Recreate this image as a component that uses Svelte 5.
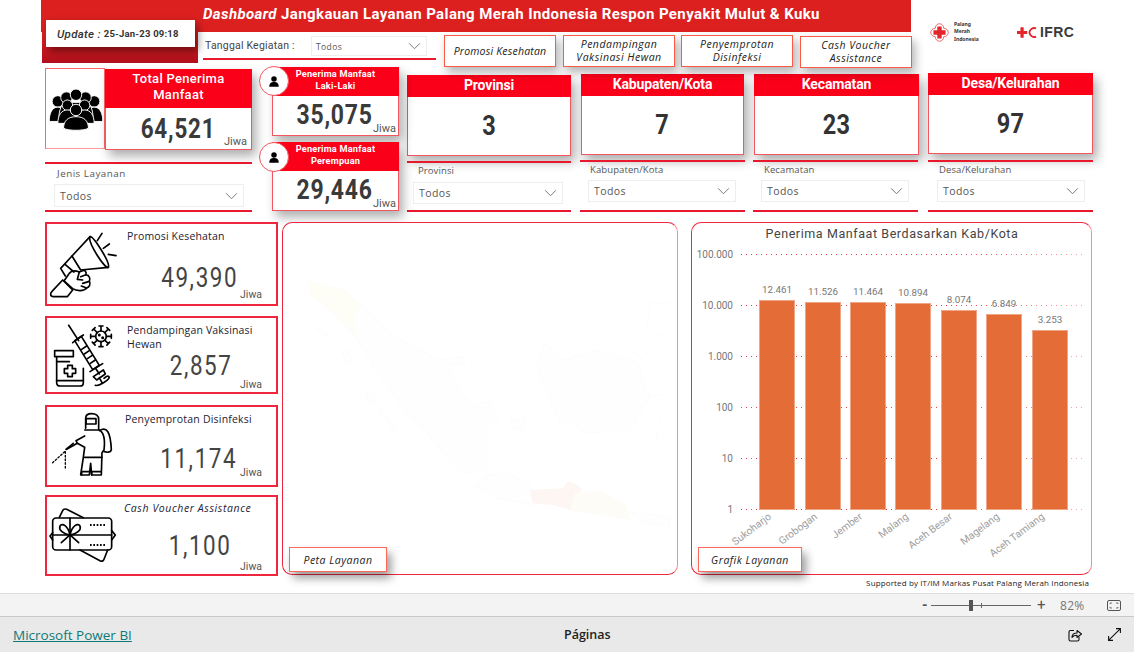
<script>
  const bars = [
    { name: 'Sukoharjo', label: '12.461', x: 759, top: 300, endX: 772 },
    { name: 'Grobogan', label: '11.526', x: 805, top: 302, endX: 818 },
    { name: 'Jember', label: '11.464', x: 850, top: 302, endX: 863 },
    { name: 'Malang', label: '10.894', x: 895, top: 303, endX: 909 },
    { name: 'Aceh Besar', label: '8.074', x: 941, top: 310, endX: 953 },
    { name: 'Magelang', label: '6.849', x: 986, top: 314, endX: 1000 },
    { name: 'Aceh Tamiang', label: '3.253', x: 1032, top: 330, endX: 1045 }
  ];
  const ticks = [
    { y: 254, t: '100.000' }, { y: 305, t: '10.000' }, { y: 356, t: '1.000' },
    { y: 407, t: '100' }, { y: 458, t: '10' }, { y: 509, t: '1' }
  ];
  const stats = [
    { k: 'p', title: 'Provinsi', value: '3' },
    { k: 'k', title: 'Kabupaten/Kota', value: '7' },
    { k: 'c', title: 'Kecamatan', value: '23' },
    { k: 'd', title: 'Desa/Kelurahan', value: '97' }
  ];
  const virus = [0, 45, 90, 135, 180, 225, 270, 315];
</script>

<div class="page">
  <div class="report">
    <header class="top">
      <div class="banner">
        <h1><em>Dashboard</em> Jangkauan Layanan Palang Merah Indonesia Respon Penyakit Mulut &amp; Kuku</h1>
      </div>
      <div class="update"><em>Update :</em> <b>25-Jan-23 09:18</b></div>
      <div class="logos">
        <svg class="pmi" viewBox="0 0 20 20" aria-hidden="true">
          <circle cx="10" cy="5.2" r="4.4" fill="#fff" stroke="#e2262b" stroke-width=".7"/>
          <circle cx="10" cy="14.8" r="4.4" fill="#fff" stroke="#e2262b" stroke-width=".7"/>
          <circle cx="5.2" cy="10" r="4.4" fill="#fff" stroke="#e2262b" stroke-width=".7"/>
          <circle cx="14.8" cy="10" r="4.4" fill="#fff" stroke="#e2262b" stroke-width=".7"/>
          <circle cx="10" cy="10" r="6" fill="#fff"/>
          <path d="M7.7 3.6h4.6v4.1h4.1v4.6h-4.1v4.1H7.7v-4.1H3.6V7.7h4.1z" fill="#e2262b"/>
        </svg>
        <div class="pmi-text">Palang<br />Merah<br />Indonesia</div>
        <svg class="ifrc-mark" viewBox="0 0 22 13" aria-hidden="true">
          <path d="M3.6 1h3.4v3.8h3.7v3.4H7V12H3.6V8.2H0V4.8h3.6z" fill="#e2262b"/>
          <path d="M20 2.3A5 5 0 0 0 13 6.500A5 5 0 0 0 20 10.700" fill="none" stroke="#e2262b" stroke-width="2"/>
        </svg>
        <span class="ifrc">IFRC</span>
      </div>
      <div class="toolbar">
        <div class="tab"></div>
        <div class="date-slicer">
          <span class="date-label">Tanggal Kegiatan :</span>
          <div class="select date-select"><span>Todos</span>
            <svg viewBox="0 0 12 7"><path d="M1 1l5 5 5-5" /></svg>
          </div>
        </div>
        <nav class="nav">
          <button class="b1">Promosi Kesehatan</button>
          <button class="b2">Pendampingan<br />Vaksinasi Hewan</button>
          <button class="b3">Penyemprotan<br />Disinfeksi</button>
          <button class="b4">Cash Voucher<br />Assistance</button>
        </nav>
      </div>
    </header>

    <section class="kpis">
      <div class="col-total">
        <div class="total-row">
          <div class="people">
            <svg viewBox="0 0 56 44" aria-hidden="true">
              <g fill="#000" stroke="#fff" stroke-width="1">
                <circle cx="9" cy="13" r="6"/><circle cx="47" cy="13" r="6"/>
                <path d="M0 34c0-9 3-15 9-15s9 6 9 15z"/><path d="M38 34c0-9 3-15 9-15s9 6 9 15z"/>
                <circle cx="18" cy="9" r="6"/><circle cx="38" cy="9" r="6"/>
                <circle cx="28" cy="6" r="6"/>
                <path d="M10 32c0-12 4-18 8-18h20c4 0 8 6 8 18z"/>
                <circle cx="19" cy="17" r="5.500"/><circle cx="37" cy="17" r="5.500"/>
                <path d="M9 36c0-9 4-14 10-14s10 5 10 14z"/><path d="M27 36c0-9 4-14 10-14s10 5 10 14z"/>
                <circle cx="28" cy="22" r="6"/>
                <path d="M15 41c0-8 5-12 13-12s13 4 13 12c-4 3-22 3-26 0z"/>
              </g>
            </svg>
          </div>
          <div class="total card">
            <div class="head">Total Penerima Manfaat</div>
            <div class="total-body"><span class="big">64,521</span><span class="jiwa">Jiwa</span></div>
          </div>
        </div>
        <div class="rule total-rule"></div>
        <div class="lbl jenis-lbl">Jenis Layanan</div>
        <div class="select jenis-select"><span>Todos</span>
          <svg viewBox="0 0 12 7"><path d="M1 1l5 5 5-5" /></svg>
        </div>
        <div class="rule end"></div>
      </div>

      <div class="col-gender">
        {#each [['Laki-Laki', '35,075'], ['Perempuan', '29,446']] as g, i}
          <div class="gender card" class:second={i === 1}>
            <div class="head">Penerima Manfaat<br />{g[0]}</div>
            <div class="gender-body"><span class="big">{g[1]}</span><span class="jiwa">Jiwa</span></div>
            <div class="circle">
              <svg viewBox="0 0 14 14" aria-hidden="true">
                <circle cx="7" cy="4" r="3.200" fill="#000"/>
                <path d="M1.500 13c0-4 2-5.500 5.500-5.500s5.500 1.500 5.500 5.500z" fill="#000"/>
              </svg>
            </div>
          </div>
        {/each}
      </div>

      {#each stats as s}
        <div class="stat {s.k}">
          <div class="card stat-card">
            <div class="stat-head">{s.title}</div>
            <div class="stat-value"><span>{s.value}</span></div>
          </div>
          <div class="rule stat-rule"></div>
          <div class="lbl stat-lbl">{s.title}</div>
          <div class="select stat-select"><span>Todos</span>
            <svg viewBox="0 0 12 7"><path d="M1 1l5 5 5-5" /></svg>
          </div>
          <div class="rule end"></div>
        </div>
      {/each}
    </section>

    <section class="main">
      <div class="services">
        <article class="svc s1">
          <svg class="ico" viewBox="0 0 80 80" aria-hidden="true">
            <g transform="translate(-7 -4) scale(.3333)" fill="none" stroke="#000" stroke-width="5" stroke-linejoin="round" stroke-linecap="round">
              <path d="M150 50 L96 108 L122 150 L205 142"/>
              <path d="M150 50 C160 48 212 128 205 142 C196 150 142 66 150 50z"/>
              <path d="M172 62L186 40M190 85L208 72M205 103L228 107"/>
              <path d="M96 108L62 145 76 168M76 134L102 156"/>
              <path d="M72 183L88 160C95 150 108 152 118 156L128 152C135 148 140 156 138 164 148 166 152 176 148 184 153 192 148 202 140 204 132 214 110 214 98 206z"/>
              <path d="M118 156L112 178 128 180M138 164L122 170M148 184L128 190M140 204L124 198"/>
              <path d="M68 180L98 210 82 230H40C30 230 30 220 36 214z"/>
            </g>
          </svg>
          <div class="svc-body">
            <h3>Promosi Kesehatan</h3>
            <div class="svc-val"><span class="num">49,390</span><span class="jiwa">Jiwa</span></div>
          </div>
        </article>
        <article class="svc s2">
          <svg class="ico" viewBox="0 0 80 74" aria-hidden="true">
            <g transform="translate(-7 -98) scale(.3333)" fill="none" stroke="#000" stroke-width="5" stroke-linejoin="round" stroke-linecap="round">
              <path d="M86 316L116 362"/>
              <path d="M104 362L124 349 178 436 158 449z"/>
              <path d="M98 368L130 345M140 378L125 388M148 392L133 402M157 406L142 416M166 420L151 430"/>
              <path d="M150 455L188 431M166 444L178 462M160 470L190 450 196 462 170 480zM178 473L186 488M166 496C175 500 205 482 208 472 205 465 198 470 192 475"/>
              <circle cx="183" cy="349" r="16"/>
              {#each virus as a}
                <path d="M183 333V319M177 318H189" transform="rotate({a} 183 349)"/>
              {/each}
              <circle cx="178" cy="345" r="2" fill="#000"/><circle cx="188" cy="353" r="2" fill="#000"/>
              <path d="M50 410V488C50 495 55 498 62 498H120C126 498 130 494 130 488V445"/>
              <path d="M44 392H100V410H44z"/>
              <path d="M50 425H88M50 482H130"/>
              <path d="M83 438h14v10h10v14h-10v10H83v-10H73v-14h10z" transform="translate(0 -2)"/>
            </g>
          </svg>
          <div class="svc-body">
            <h3>Pendampingan Vaksinasi Hewan</h3>
            <div class="svc-val"><span class="num">2,857</span><span class="jiwa">Jiwa</span></div>
          </div>
        </article>
        <article class="svc s3">
          <svg class="ico" viewBox="0 0 80 78" aria-hidden="true">
            <g transform="translate(-7 -7) scale(.3333)" fill="none" stroke="#000" stroke-width="5" stroke-linejoin="round" stroke-linecap="round">
              <path d="M137 85V55C137 45 145 41 155 41 168 41 176 48 176 58V88"/>
              <path d="M138 56H168V72H138z"/>
              <path d="M134 90H178C192 98 196 118 192 150L186 158 184 225H155L152 190 148 225H122L130 172 134 142 112 130 80 148"/>
              <path d="M134 108L108 122 112 130M178 92C200 78 212 95 214 150 212 158 200 158 190 154"/>
              <path d="M134 172H186M125 225V215H150M155 225V215H182"/>
              <path d="M100 130L78 148"/>
              <path d="M74 155L35 191M76 155V210" stroke-dasharray="5 6" stroke-width="4"/>
            </g>
          </svg>
          <div class="svc-body">
            <h3>Penyemprotan Disinfeksi</h3>
            <div class="svc-val"><span class="num">11,174</span><span class="jiwa">Jiwa</span></div>
          </div>
        </article>
        <article class="svc s4">
          <svg class="ico" viewBox="0 0 80 77" aria-hidden="true">
            <g transform="translate(-7 -97) scale(.3333)" fill="none" stroke="#000" stroke-width="5" stroke-linejoin="round" stroke-linecap="round">
              <path d="M58 352L68 332C70 327 74 326 80 328L130 353M38 398L30 408 38 420M215 392L226 405 215 420M120 450L180 482C186 485 190 484 192 478L203 450"/>
              <rect x="38" y="354" width="177" height="96" rx="10"/>
              <path d="M90 354V450M38 405H215"/>
              <path d="M90 405C70 402 55 390 60 378 66 368 84 376 90 405 96 376 114 368 120 378 125 390 110 402 90 405zM90 405L64 428M90 405L116 428"/>
              <path d="M150 375H195M150 435H195" stroke-dasharray="5 5" stroke-linecap="butt" stroke-width="6"/>
            </g>
          </svg>
          <div class="svc-body">
            <h3><em>Cash Voucher Assistance</em></h3>
            <div class="svc-val"><span class="num">1,100</span><span class="jiwa">Jiwa</span></div>
          </div>
        </article>
      </div>

      <div class="panel map">
        <svg class="map-svg" viewBox="0 0 396 353" aria-hidden="true">
          <g transform="translate(-2 38) scale(.3333)" stroke="#fafafa" stroke-width="2" fill="#fefefe">
            <path d="M85 65L130 75 190 90 240 130 340 230 430 270 470 310 510 330 545 400 620 470 620 630 550 640 500 590 440 520 380 460 280 320 230 235 150 150 90 100z"/>
            <path d="M85 65L130 75 190 90 240 130 220 170 235 235 205 200 150 150 90 100z" fill="#fefdf6" stroke="none"/>
            <path d="M795 250L850 300 950 270 1020 290 1075 310 1090 370 1110 410 1050 510 920 520 880 490 840 490 770 320z"/>
            <path d="M1050 270L1100 200 1110 130 1170 128M1055 275L1090 295 1130 230 1175 215M1110 410L1170 400M1055 550L1130 510 1130 545 1145 460" fill="none"/>
            <path d="M185 275L205 270 220 310 200 310zM255 395L275 395 290 430 270 435zM115 200L145 225 135 228 110 208zM300 445L350 505 340 510 300 460z"/>
            <path d="M435 275L470 300 550 290 555 310 480 320zM590 430L630 425 660 480 620 490zM690 480L735 475 735 505 700 510z"/>
            <path d="M585 680L620 645 680 640 750 670 760 735 650 715z"/>
            <path d="M750 690L850 685 860 665 880 668 905 685 885 755 820 735 760 730z" fill="#fdf6f2" stroke="none"/>
            <path d="M885 700L960 690 1040 735 1050 780 960 765 870 752z" fill="#fefcf6" stroke="none"/>
            <path d="M1050 755L1170 770 1170 800 1080 785z"/>
          </g>
        </svg>
        <button class="tag tag-map">Peta Layanan</button>
      </div>

      <div class="panel chart">
        <svg class="chart-svg" viewBox="691 222 401 353">
          <defs>
            <linearGradient id="gridfade" gradientUnits="userSpaceOnUse" x1="741" y1="0" x2="1084" y2="0">
              <stop offset="0" stop-color="#f23a42"/><stop offset=".6" stop-color="#f23a42"/><stop offset="1" stop-color="#f9a5a8"/>
            </linearGradient>
          </defs>
          <text class="title" x="892" y="238" text-anchor="middle">Penerima Manfaat Berdasarkan Kab/Kota</text>
          {#each ticks as t}
            <text class="axis" x="733" y={t.y + 4} text-anchor="end">{t.t}</text>
            <line x1="741" x2="1084" y1={t.y + .5} y2={t.y + .5} stroke="url(#gridfade)" class="grid" />
          {/each}
          {#each bars as b}
            <rect x={b.x + .5} y={b.top + .5} width="35" height={509 - b.top} class="bar" />
            <text class="val" x={b.x + 18} y={b.top - 7} text-anchor="middle">{b.label}</text>
            <text class="cat" text-anchor="end" transform="translate({b.endX} 518) rotate(-37)">{b.name}</text>
          {/each}
        </svg>
        <button class="tag tag-chart">Grafik Layanan</button>
      </div>
    </section>
    <div class="credit">Supported by IT/IM Markas Pusat Palang Merah Indonesia</div>
  </div>

  <div class="zoombar">
    <span class="minus">-</span>
    <div class="slider"><i class="thumb"></i><i class="tick"></i></div>
    <span class="plus">+</span>
    <span class="pct">82%</span>
    <svg class="fit" viewBox="0 0 14 11" aria-hidden="true">
      <rect x=".5" y=".5" width="13" height="10" rx="1.500" fill="none" stroke="#555"/>
      <path d="M3 4V3h2M9 3h2v1M3 7v1h2M9 8h2V7" fill="none" stroke="#555" stroke-width=".8"/>
    </svg>
  </div>
  <footer class="foot">
    <a href="#top" class="pbi">Microsoft Power BI</a>
    <span class="pages">Páginas</span>
    <svg class="share" viewBox="0 0 14 14" aria-hidden="true">
      <path d="M6 2.500H2.500A1.500 1.500 0 0 0 1 4v7.500A1.500 1.500 0 0 0 2.500 13h7a1.500 1.500 0 0 0 1.500-1.500V9" fill="none" stroke="#111" stroke-width="1.100"/>
      <path d="M4 9.500C4 6.500 6 5 9 5V2.500L13.500 6 9 9.500V7.300C7 7.300 5 8 4 9.500z" fill="none" stroke="#111" stroke-width="1.100" stroke-linejoin="round"/>
    </svg>
    <svg class="expand" viewBox="0 0 13 13" aria-hidden="true">
      <path d="M8 .6h4.400V5M12.200.8L.8 12.200M.6 8v4.400H5" fill="none" stroke="#111" stroke-width="1.100"/>
    </svg>
  </footer>
</div>

<style>
  :global(body) { margin: 0; background: #fff; }
  .page { width: 1134px; height: 652px; overflow: hidden; display: flex; flex-direction: column; font-family: Roboto, "Liberation Sans", sans-serif; color: #333; }
  .report { height: 593px; position: relative; flex: none; }
  button { font: inherit; cursor: pointer; }

  .top { height: 66px; position: relative; }
  .banner { margin-left: 41px; width: 870px; height: 32px; background: #dc2020; box-sizing: border-box; padding-left: 162px; }
  h1 { margin: 0; padding-top: 4px; font-size: 15px; line-height: 20px; font-weight: 700; color: #fff; letter-spacing: .39px; white-space: nowrap; }
  .update { position: absolute; left: 46px; top: 20px; width: 149px; height: 27px; padding-left: 11px; box-sizing: border-box; background: #fff; box-shadow: 3px 4px 8px rgba(0,0,0,.45); display: flex; align-items: center; gap: 3px; font-size: 10.500px; color: #333; z-index: 2; }
  .update em { font-weight: 500; font-size: 11.500px; letter-spacing: .3px; }
  .update b { font-weight: 700; font-size: 9.500px; letter-spacing: .2px; }
  .logos { position: absolute; left: 930px; top: 22px; display: flex; align-items: center; height: 20px; }
  .pmi { width: 19px; height: 19px; }
  .pmi-text { margin-left: 5px; font-size: 5px; line-height: 7.500px; font-weight: 700; color: #333; width: 35px; font-family: "Noto Sans", sans-serif; }
  .ifrc-mark { margin-left: 28px; width: 21px; height: 13px; }
  .ifrc { margin-left: 2px; font-size: 14px; font-weight: 700; color: #3a3a3a; letter-spacing: .4px; font-family: "Liberation Sans", sans-serif; }

  .toolbar { display: flex; height: 34px; }
  .tab { margin-left: 42px; width: 156px; height: 31px; background: linear-gradient(#dc2020 10%, #b00f1c); flex: none; }
  .date-slicer { margin-left: 5px; width: 233px; height: 26px; border-bottom: 2px solid #e8192c; display: flex; position: relative; flex: none; }
  .date-label { padding: 7px 0 0 2px; font-size: 10.500px; letter-spacing: .2px; color: #444; width: 106px; flex: none; font-family: Roboto, sans-serif; }
  .nav { margin-left: 8px; display: flex; gap: 7px; padding-top: 3px; }
  .nav button { width: 112px; height: 32px; padding: 0; background: #fff; border: 1px solid #fb5a45; box-shadow: 3px 5px 9px rgba(0,0,0,.3); font-style: italic; font-size: 10.500px; line-height: 13px; letter-spacing: .5px; color: #222; font-family: "Open Sans", sans-serif; }
  .nav .b1 { letter-spacing: .2px; }
  .nav .b3 { margin-left: -1px; }
  .nav .b4 { margin-top: 1px; }

  .select { box-sizing: border-box; background: #fff; border: 1px solid #eee; display: flex; align-items: center; justify-content: space-between; padding: 0 5px; font-size: 11px; letter-spacing: .4px; color: #555; font-family: "Open Sans", sans-serif; }
  .select svg { width: 13px; height: 8px; fill: none; stroke: #777; stroke-width: .9; }
  .date-select { margin-top: 4px; width: 116px; height: 20px; font-size: 8.500px; padding-left: 4px; }
  .date-select span { margin-top: 1px; }

  .kpis { height: 146px; padding-left: 45px; display: flex; }
  .card { box-sizing: border-box; background: #fff; border: 1px solid #f4565f; box-shadow: 4px 6px 10px rgba(0,0,0,.32); }
  .big { display: inline-block; font-size: 27px; line-height: 32px; font-weight: 700; letter-spacing: 1px; color: #3a3a3a; transform: scaleX(.83); }
  .jiwa { font-size: 11px; color: #555; letter-spacing: 0; }
  .rule { height: 2px; background: #e8192c; flex: none; }
  .end { margin-top: auto; }
  .lbl { font-size: 9.800px; letter-spacing: .5px; color: #555; line-height: 14px; font-family: "Open Sans", sans-serif; }

  .col-total { width: 207px; flex: none; display: flex; flex-direction: column; height: 146px; }
  .total-row { display: flex; margin-top: 2px; height: 82px; }
  .people { box-sizing: border-box; width: 60px; height: 81px; background: #fff; border: 1px solid #f66; border-bottom-color: #f99; display: flex; align-items: center; justify-content: center; }
  .people svg { width: 54px; height: 42px; margin-left: 2px; margin-top: 2px; }
  .total { width: 147px; height: 81px; margin-top: 1px; }
  .total .head { height: 39px; background: #fa0019; color: #fff; font-size: 13px; line-height: 16px; font-weight: 500; letter-spacing: .3px; text-align: center; padding: 2px 12px 0; box-sizing: border-box; margin: -1px -1px 0; }
  .total-body { position: relative; display: flex; justify-content: center; padding: 5px 0 0 0; }
  .total-body .jiwa { position: absolute; right: 4px; bottom: -3px; }
  .total-rule { margin-top: 12px; }
  .jenis-lbl { margin: 3px 0 0 12px; }
  .jenis-select { margin: 3px 0 0 9px; width: 190px; height: 23px; font-size: 10.500px; padding: 0 5px; }

  .col-gender { width: 140px; margin-left: 7px; flex: none; padding-top: 1px; }
  .gender { position: relative; margin-left: 13px; width: 127px; height: 69px; }
  .second { margin-top: 6px; }
  .gender .head { height: 29px; margin: -1px -1px 0; background: #fa0019; color: #fff; font-size: 9.200px; line-height: 11.500px; font-weight: 700; letter-spacing: .2px; text-align: center; padding: 1px 0 0; box-sizing: border-box; }
  .gender-body { display: flex; justify-content: center; position: relative; padding: 3px 2px 0 0; }
  .gender-body .big { font-size: 28px; transform: scaleX(.82); }
  .gender-body .jiwa { position: absolute; right: 2px; bottom: -4px; }
  .circle { position: absolute; left: -14px; top: -2px; width: 30px; height: 30px; box-sizing: border-box; border-radius: 50%; background: #fff; border: 1px solid #f4565f; display: flex; align-items: center; justify-content: center; }
  .second .circle { top: -1px; }
  .circle svg { width: 12px; height: 13px; }

  .stat { width: 164px; margin-left: 8px; flex: none; display: flex; flex-direction: column; height: 146px; }
  .stat.k { margin-left: 9px; width: 165px; }
  .stat.c { margin-left: 8px; width: 165px; }
  .stat.d { margin-left: 10px; width: 165px; }
  .stat-card { height: 81px; margin-top: 9px; }
  .stat.k .stat-card { margin: 8px 1px 0; }
  .stat.c .stat-card { margin: 8px -1px 0 1px; }
  .stat.d .stat-card { margin-top: 7px; }
  .stat-head { height: 22px; margin: -1px -1px 0; background: #fa0019; color: #fff; font-size: 14px; font-weight: 700; text-align: center; line-height: 20px; letter-spacing: -.15px; }
  .stat-value { text-align: center; padding-top: 12px; }
  .stat-value span { display: inline-block; font-size: 28px; line-height: 34px; font-weight: 700; color: #333; letter-spacing: .5px; transform: scaleX(.84); }
  .stat-rule { margin-top: 5px; }
  .stat.d .stat-rule { margin-top: 6px; }
  .stat-lbl { margin-left: 11px; margin-top: 1px; font-size: 9.500px; letter-spacing: .1px; }
  .stat.k .stat-lbl { margin: 1px 0 0 10px; }
  .stat.c .stat-lbl, .stat.d .stat-lbl { margin: 1px 0 0 11px; }
  .stat-select { margin: 4px 0 0 6px; width: 150px; height: 22px; font-size: 10.500px; }
  .stat.k .stat-select { margin: 3px 0 0 8px; width: 148px; }
  .stat.c .stat-select { margin: 3px 0 0 8px; width: 148px; }
  .stat.d .stat-select { margin: 3px 0 0 9px; width: 148px; }

  .main { display: flex; padding: 10px 0 0 45px; height: 354px; box-sizing: border-box; }
  .services { width: 233px; flex: none; display: flex; flex-direction: column; }
  .svc { box-sizing: border-box; width: 233px; border: 2px solid #f0263e; display: flex; background: #fff; }
  .s1 { height: 84px; }
  .s2 { height: 78px; margin-top: 10px; }
  .s3 { height: 82px; margin-top: 11px; }
  .s4 { height: 81px; margin-top: 8px; }
  .ico { width: 80px; height: 100%; flex: none; }
  .svc-body { flex: 1; display: flex; flex-direction: column; padding-top: 5px; min-width: 0; }
  h3 { margin: 0; font-size: 10.500px; line-height: 14px; font-weight: 400; color: #1d2233; letter-spacing: .16px; font-family: "Open Sans", sans-serif; }
  .s3 h3 { margin-left: -2px; letter-spacing: .2px; }
  .s4 h3 { margin-left: -3px; margin-top: -1px; letter-spacing: .6px; }
  .svc-val { margin-top: auto; display: flex; justify-content: flex-end; align-items: flex-end; padding: 0 14px 3px 0; }
  .num { font-size: 28px; line-height: 30px; font-weight: 400; letter-spacing: 2px; color: #444; transform: scaleX(.8); transform-origin: right center; margin-right: 2px; margin-bottom: 8px; white-space: nowrap; }
  .s2 .svc-val { padding-bottom: 1px; }
  .s2 .num { margin-right: 8px; margin-bottom: 10px; }
  .s3 .svc-val { padding-bottom: 6px; }
  .s3 .num { margin-right: 3px; margin-bottom: 5px; }
  .s4 .svc-val { padding-bottom: 1px; }
  .s4 .num { margin-right: 9px; margin-bottom: 12px; }
  .svc-val .jiwa { font-size: 10.500px; line-height: 12px; }

  .panel { box-sizing: border-box; height: 353px; position: relative; background: #fff; border: 1px solid #f0263e; border-right-color: #f88; border-radius: 10px; flex: none; }
  .map { width: 396px; margin-left: 4px; }
  .chart { width: 401px; margin-left: 13px; }
  .map-svg, .chart-svg { position: absolute; left: -1px; top: -1px; width: 396px; height: 353px; }
  .chart-svg { width: 401px; }
  .title { font-size: 12.500px; letter-spacing: .58px; fill: #444; }
  .axis { font-size: 10px; fill: #777; }
  .val { font-size: 9.800px; fill: #777; }
  .cat { font-size: 10.300px; fill: #a0a0a0; }
  .grid { stroke-width: 1; stroke-dasharray: 1 4; }
  .bar { fill: #e46c37; stroke: #f0a586; stroke-width: 1; }
  .tag { position: absolute; left: 6px; bottom: 2px; height: 25px; padding: 0; background: #fff; border: 1px solid #fb6a58; box-shadow: 4px 6px 10px rgba(0,0,0,.4); font-style: italic; font-size: 10.500px; letter-spacing: .5px; color: #222; font-family: "Open Sans", sans-serif; }
  .tag-map { width: 98px; }
  .tag-chart { width: 104px; }
  .credit { position: absolute; right: 45px; top: 577px; font-size: 8px; line-height: 12px; letter-spacing: .13px; color: #222; font-family: "Open Sans", sans-serif; }

  .zoombar { height: 22px; flex: none; background: #f3f3f3; border-top: 1px solid #dcdcdc; border-bottom: 1px solid #c8c8c8; display: flex; align-items: center; position: relative; color: #555; }
  .minus { margin-left: 922px; width: 9px; font-size: 14px; font-weight: 700; line-height: 20px; }
  .slider { width: 100px; height: 1px; background: #666; position: relative; }
  .thumb { position: absolute; left: 38px; top: -5px; width: 4px; height: 11px; background: #555; }
  .tick { position: absolute; left: 50px; top: -2px; width: 1px; height: 5px; background: #666; }
  .plus { margin-left: 6px; width: 12px; font-size: 15px; line-height: 20px; }
  .pct { margin-left: 11px; width: 36px; font-size: 12px; color: #777; letter-spacing: .3px; font-family: "Open Sans", sans-serif; }
  .fit { margin-left: 11px; width: 14px; height: 11px; }
  .foot { flex: 1; background: #e9e9e9; display: flex; align-items: center; position: relative; }
  .pbi { margin-left: 13px; width: 121px; flex: none; white-space: nowrap; font-size: 13.500px; color: #0d7a78; text-decoration: underline; font-family: "Open Sans", sans-serif; }
  .pages { margin-left: 430px; width: 50px; font-size: 12.500px; font-weight: 600; color: #222; font-family: "Open Sans", sans-serif; }
  .share { margin-left: 454px; width: 14px; height: 14px; }
  .expand { margin-left: 26px; width: 13px; height: 13px; }
</style>
